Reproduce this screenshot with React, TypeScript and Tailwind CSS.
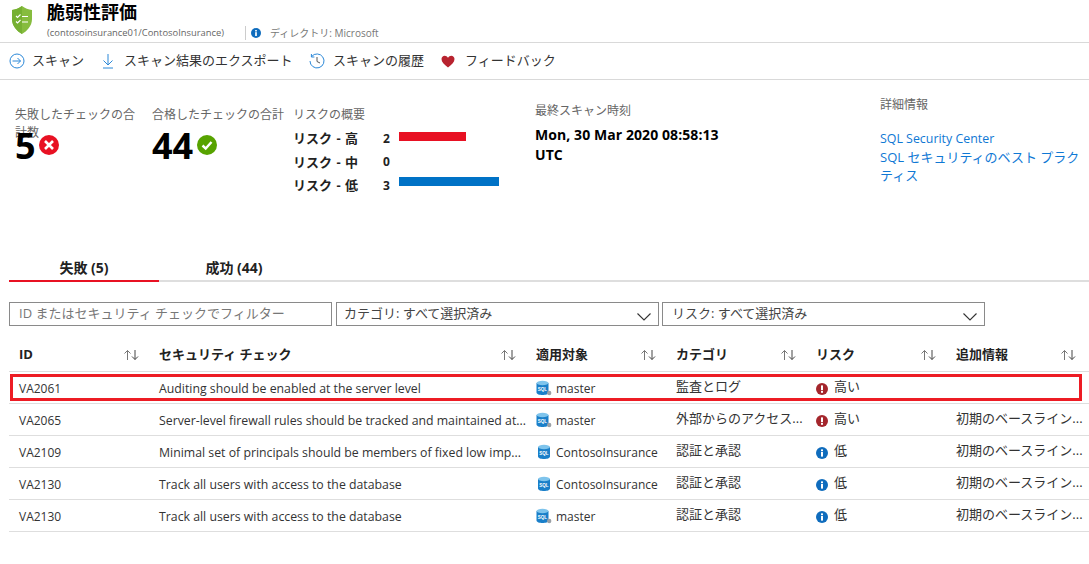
import React from "react";

const font = { fontFamily: '"Open Sans", "Noto Sans CJK JP", sans-serif' };

function Shield() {
  return (
    <svg width="20" height="28" viewBox="0 0 20 28">
      <path d="M10 0 C7 2.5 3.5 3.5 0 4 V13 C0 20 5 25 10 28 C15 25 20 20 20 13 V4 C16.5 3.5 13 2.5 10 0 Z" fill="#86bc3e" />
      <path d="M10 0 C7 2.5 3.5 3.5 0 4 V13 C0 20 5 25 10 28 Z" fill="#76b032" />
      <path d="M4 10 l1.5 1.5 l3 -3 M4 15.5 l1.5 1.5 l3 -3" stroke="#fff" strokeWidth="1.1" fill="none" />
      <path d="M10 10.5 h6 M10 16 h6" stroke="#fff" strokeWidth="1.1" />
    </svg>
  );
}

function InfoDot({ size = 12 }: { size?: number }) {
  return (
    <svg width={size} height={size} viewBox="0 0 12 12" className="shrink-0">
      <circle cx="6" cy="6" r="6" fill="#0f6cbd" />
      <rect x="5" y="5" width="2" height="4.6" fill="#fff" />
      <rect x="5" y="2.4" width="2" height="1.8" fill="#fff" />
    </svg>
  );
}

function HighDot() {
  return (
    <svg width="12" height="12" viewBox="0 0 12 12" className="shrink-0">
      <circle cx="6" cy="6" r="6" fill="#a4262c" />
      <rect x="5" y="2.4" width="2" height="4.8" fill="#fff" />
      <rect x="5" y="8" width="2" height="1.8" fill="#fff" />
    </svg>
  );
}

function Db({ variant }: { variant: "master" | "user" }) {
  const master = variant === "master";
  return (
    <svg width="16" height="16" viewBox="0 0 16 16" className="shrink-0 -mt-[2px]">
      <g transform={master ? "" : "translate(1.5 0)"}>
        <path d="M0.5 3 V12.5 C0.5 14.2 3.5 15 6.5 15 C9.5 15 12.5 14.2 12.5 12.5 V3 Z" fill="#1a7fc9" />
        <ellipse cx="6.5" cy="3" rx="6" ry="2.2" fill="#7fc4ec" />
        <text x="6.5" y="10.5" fontSize="4.5" fontWeight="700" fill="#fff" textAnchor="middle" style={{ fontFamily: '"Liberation Sans", sans-serif' }}>SQL</text>
      </g>
      {master ? <circle cx="13.2" cy="13" r="2.2" fill="#9aa0a6" /> : null}
    </svg>
  );
}

function Sort() {
  return (
    <svg width="17" height="12" viewBox="0 0 17 12" className="shrink-0">
      <path d="M4.5 11 V1.5 M1.5 4.5 L4.5 1.5 L7.5 4.5" stroke="#777" strokeWidth="1" fill="none" />
      <path d="M12 1 V10.5 M9 7.5 L12 10.5 L15 7.5" stroke="#444" strokeWidth="1" fill="none" />
    </svg>
  );
}

function Chevron() {
  return (
    <svg width="14" height="8" viewBox="0 0 14 8" className="shrink-0 mt-[5px]">
      <path d="M0.5 0.5 L7 7 L13.5 0.5" stroke="#333" strokeWidth="1.1" fill="none" />
    </svg>
  );
}

const columns = ["w-[140px]", "w-[377px]", "w-[140px]", "w-[140px]", "w-[140px]", "w-[140px]"];

const heads = ["ID", "セキュリティ チェック", "適用対象", "カテゴリ", "リスク", "追加情報"];

const rows = [
  { id: "VA2061", check: "Auditing should be enabled at the server level", db: "master", cat: "監査とログ", high: true, more: "" },
  { id: "VA2065", check: "Server-level firewall rules should be tracked and maintained at...", db: "master", cat: "外部からのアクセス...", high: true, more: "初期のベースライン..." },
  { id: "VA2109", check: "Minimal set of principals should be members of fixed low imp...", db: "ContosoInsurance", cat: "認証と承認", high: false, more: "初期のベースライン..." },
  { id: "VA2130", check: "Track all users with access to the database", db: "ContosoInsurance", cat: "認証と承認", high: false, more: "初期のベースライン..." },
  { id: "VA2130", check: "Track all users with access to the database", db: "master", cat: "認証と承認", high: false, more: "初期のベースライン..." },
];

const risks = [
  { l: "リスク - 高", n: "2", bar: "w-[67px] bg-[#e81123] -mt-[5px]" },
  { l: "リスク - 中", n: "0", bar: "w-0" },
  { l: "リスク - 低", n: "3", bar: "w-[100px] bg-[#0072c6] -mt-[8px]" },
];

export default function App() {
  return (
    <div className="w-[1089px] h-[564px] overflow-hidden bg-white text-[#1b1b1b] text-[12px]" style={font}>
      <header className="h-[43px] border-b border-[#d9d9d9] flex items-start pl-[12px]">
        <div className="mt-[6px] w-[35px]"><Shield /></div>
        <div className="flex flex-col">
          <div className="text-[18px] leading-[24px] font-bold text-black">脆弱性評価</div>
          <div className="flex items-center h-[14px] mt-[2px]">
            <span className="text-[9.4px] text-[#666] w-[198px] whitespace-nowrap">(contosoinsurance01/ContosoInsurance)</span>
            <div className="h-[14px] border-l border-[#ccc] mr-[5px]" />
            <InfoDot size={10} />
            <span className="text-[10px] text-[#777] ml-[9px] whitespace-nowrap">ディレクトリ: Microsoft</span>
          </div>
        </div>
      </header>

      <nav className="h-[37px] border-b border-[#d9d9d9] flex items-center pl-[9px] text-[13px] text-[#333] whitespace-nowrap">
        <svg width="16" height="16" viewBox="0 0 16 16" className="mr-[7px]">
          <circle cx="8" cy="8" r="7" stroke="#2b88d8" strokeWidth="1" fill="none" />
          <path d="M3.5 8 H11.5 M8.5 5 L11.5 8 L8.5 11" stroke="#2b88d8" strokeWidth="1" fill="none" />
        </svg>
        <span className="w-[70px]">スキャン</span>
        <svg width="12" height="16" viewBox="0 0 12 16" className="mr-[10px]">
          <path d="M6 1 V12 M1.5 7.5 L6 12 L10.5 7.5" stroke="#2b88d8" strokeWidth="1" fill="none" />
          <path d="M1 15 H11" stroke="#2b88d8" strokeWidth="1" />
        </svg>
        <span className="w-[185px]">スキャン結果のエクスポート</span>
        <svg width="16" height="16" viewBox="0 0 16 16" className="mr-[8px]">
          <path d="M2.6 3.5 A7 7 0 1 1 1 8" stroke="#2b88d8" strokeWidth="1" fill="none" />
          <path d="M2.4 1 V4 H5.4" stroke="#2b88d8" strokeWidth="1" fill="none" />
          <path d="M8 4 V8.5 L11 10" stroke="#555" strokeWidth="1" fill="none" />
        </svg>
        <span className="w-[108px]">スキャンの履歴</span>
        <svg width="14" height="13" viewBox="0 0 14 13" className="mr-[10px]">
          <path d="M7 12.5 C3 9.5 0.5 7 0.5 4 C0.5 2 2 0.7 3.7 0.7 C5 0.7 6.3 1.5 7 2.7 C7.7 1.5 9 0.7 10.3 0.7 C12 0.7 13.5 2 13.5 4 C13.5 7 11 9.5 7 12.5 Z" fill="#b8232f" />
        </svg>
        <span>フィードバック</span>
      </nav>

      <section className="h-[175px] flex items-start">
        <div className="w-[137px] ml-[15px] mt-[26px] relative">
          <div className="w-[124px] text-[12px] leading-[18px] text-[#666]">失敗したチェックの合計数</div>
          <div className="absolute top-[17px] left-0 flex items-center">
            <span className="text-[36px] leading-[46px] font-bold text-black">5</span>
            <svg width="20" height="20" viewBox="0 0 20 20" className="ml-[3px] -mt-[3px]">
              <circle cx="10" cy="10" r="10" fill="#e81123" />
              <path d="M6 6 L14 14 M14 6 L6 14" stroke="#fff" strokeWidth="2.6" />
            </svg>
          </div>
        </div>
        <div className="w-[141px] mt-[26px] relative">
          <div className="text-[12px] leading-[18px] text-[#666] whitespace-nowrap">合格したチェックの合計</div>
          <div className="flex items-center mt-[-1px]">
            <span className="text-[36px] leading-[46px] font-bold text-black">44</span>
            <svg width="20" height="20" viewBox="0 0 20 20" className="ml-[4px] -mt-[3px]">
              <circle cx="10" cy="10" r="10" fill="#57a300" />
              <path d="M5.5 10.5 L8.7 13.5 L14.5 7" stroke="#fff" strokeWidth="2.4" fill="none" />
            </svg>
          </div>
        </div>
        <div className="w-[242px] mt-[26px]">
          <div className="text-[12px] leading-[18px] text-[#666]">リスクの概要</div>
          <div className="mt-[3px] flex flex-col text-[12px] font-bold text-[#222]">
            {risks.map((r) => (
              <div key={r.l} className="h-[23.5px] flex items-center">
                <span className="w-[90px] whitespace-nowrap text-[13px] [word-spacing:1px]">{r.l}</span>
                <span className="w-[15px]">{r.n}</span>
                <div className={`h-[9px] ml-[1px] ${r.bar}`} />
              </div>
            ))}
          </div>
        </div>
        <div className="w-[345px] mt-[22px]">
          <div className="text-[12px] leading-[18px] text-[#666]">最終スキャン時刻</div>
          <div className="mt-[5px] text-[14px] leading-[20px] font-bold text-black w-[190px] tracking-[0.08px]">
            Mon, 30 Mar 2020 08:58:13 UTC
          </div>
        </div>
        <div className="w-[205px] mt-[16px]">
          <div className="text-[12px] leading-[18px] text-[#666]">詳細情報</div>
          <div className="mt-[16px] text-[13px] leading-[18px] text-[#0f78d4]">
            <div className="text-[12.4px]">SQL Security Center</div>
            <div>SQL セキュリティのベスト プラクティス</div>
          </div>
        </div>
      </section>

      <div className="ml-[9px] h-[27px] flex border-b-2 border-[#dedede] text-[14px] font-bold text-[#222]">
        <div className="w-[150px] h-[27px] border-b-2 border-[#e81123] flex items-center justify-center">失敗 (5)</div>
        <div className="w-[150px] h-[25px] flex items-center justify-center">成功 (44)</div>
      </div>

      <div className="ml-[9px] mt-[20px] flex text-[13px]">
        <div className="w-[323px] h-[24px] border border-[#8a8a8a] flex items-center px-[9px] text-[#777] whitespace-nowrap">
          ID またはセキュリティ チェックでフィルター
        </div>
        <div className="w-[323px] ml-[4px] h-[24px] border border-[#8a8a8a] flex items-center justify-between pl-[7px] pr-[7px] text-[#444]">
          <span>カテゴリ: すべて選択済み</span>
          <Chevron />
        </div>
        <div className="w-[323px] ml-[3px] h-[24px] border border-[#8a8a8a] flex items-center justify-between pl-[9px] pr-[7px] text-[#444]">
          <span>リスク: すべて選択済み</span>
          <Chevron />
        </div>
      </div>

      <div className="ml-[9px] mt-[13px] w-[1080px] relative">
        <div className="flex h-[33px] border-b border-[#dedede] font-bold text-[13px] text-[#222]">
          {heads.map((h, i) => (
            <div key={h} className={`${columns[i]} pl-[10px] pr-[9px] flex items-center justify-between -mt-[1px]`}>
              <span className="whitespace-nowrap">{h}</span>
              <Sort />
            </div>
          ))}
        </div>
        {rows.map((r, i) => (
          <div key={i} className="flex h-[32px] pt-[2px] border-b border-[#dedede] items-center text-[12px] text-[#333]">
            <div className={`${columns[0]} pl-[10px]`}>{r.id}</div>
            <div className={`${columns[1]} pl-[10px] whitespace-nowrap overflow-hidden text-[12.3px] mt-[1px]`}>{r.check}</div>
            <div className={`${columns[2]} pl-[10px] flex items-center gap-[4px] whitespace-nowrap`}>
              <Db variant={r.db === "master" ? "master" : "user"} />
              <span>{r.db}</span>
            </div>
            <div className={`${columns[3]} pl-[10px] whitespace-nowrap -mt-[3px] text-[13px]`}>{r.cat}</div>
            <div className={`${columns[4]} pl-[10px] flex items-center gap-[6px]`}>
              {r.high ? <HighDot /> : <InfoDot />}
              <span className="-mt-[3px] text-[13px]">{r.high ? "高い" : "低"}</span>
            </div>
            <div className={`${columns[5]} pl-[10px] whitespace-nowrap -mt-[3px] text-[13px]`}>{r.more}</div>
          </div>
        ))}
        <div className="absolute left-[1px] top-[35px] w-[1072px] h-[27px] border-[3px] border-[#ed1c24]" />
      </div>
    </div>
  );
}
